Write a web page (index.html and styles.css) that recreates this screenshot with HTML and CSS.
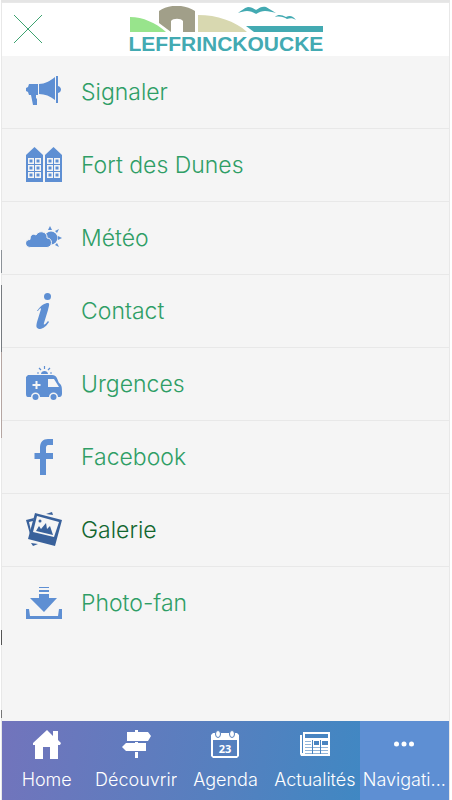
FILE: index.html
```html
<!DOCTYPE html>
<html lang="fr">
  <head>
    <meta charset="UTF-8" />
    <meta name="viewport" content="width=device-width, initial-scale=1.0" />
    <title>Leffrinckoucke</title>
    <link rel="stylesheet" href="styles.css">
  </head>
  <body>
    <div class="app">
      <header class="header">
        <button class="close" type="button" aria-label="Fermer">
          <svg width="30" height="30" viewBox="0 0 30 30">
            <path d="M1 1l28 28M29 1L1 29" stroke="#3da370" stroke-width="1" />
          </svg>
        </button>
        <div class="logo">
          <svg class="logo-drawing" width="194" height="27" viewBox="0 0 194 27">
            <path d="M1 11c13 0 26 6 36 15H1z" fill="#98e48c" />
            <path d="M30 5c9-7 26-7 36 0v21H54V15c-2-3-10-3-12 0v11l-12-9z" fill="#a19f89" />
            <path d="M69 9c19 0 37 6 49 17H69z" fill="#d8d8b0" />
            <path d="M117 20h77v6h-69z" fill="#43aab2" />
            <path d="M109 7c3-2 6-5 10-6 3 0 5 1 8 3 4-3 7-4 10-3l10 6c-4-1-7-2-11-2-3 0-6 1-9 3-3-2-6-3-9-3s-6 1-9 2z" fill="#43aab2" />
            <path d="M146 11c3-3 7-2 11 0 4-2 7-1 10 3-3-2-6-2-9-1-3-2-7-3-12-2z" fill="#43aab2" />
          </svg>
          <span class="logo-name">LEFFRINCKOUCKE</span>
        </div>
      </header>

      <nav class="menu">
        <a class="menu-item" href="#">
          <svg class="menu-icon" viewBox="0 0 36 36">
            <path d="M3 10h9v11h-2v3l1 1v6H7L5 21H3l-1-3-2-1v-3l2-1z" />
            <path d="M13 10c6 0 11-3 16-7v23c-5-4-10-6-16-6z" />
            <path d="M30 2h2v10c4 1 4 6 0 7v10h-2z" />
          </svg>
          <span>Signaler</span>
        </a>
        <a class="menu-item" href="#">
          <svg class="menu-icon" viewBox="0 0 36 36">
            <path d="M0 8L8.500 0 17 8v27H0zM19 8l8.500-8L36 8v27H19z" />
            <path fill="#f5f5f5" d="M2 11h6v6H2zM9 11h6v6H9zM2 18h6v6H2zM9 18h6v6H9zM2 25h6v6H2zM9 25h6v6H9zM21 11h6v6h-6zM28 11h6v6h-6zM21 18h6v6h-6zM28 18h6v6h-6zM21 25h6v6h-6zM28 25h6v6h-6z" />
            <path d="M3.500 12.500h3v3h-3zM10.500 12.500h3v3h-3zM3.500 19.500h3v3h-3zM10.500 19.500h3v3h-3zM3.500 26.500h3v3h-3zM10.500 26.500h3v3h-3zM22.500 12.500h3v3h-3zM29.500 12.500h3v3h-3zM22.500 19.500h3v3h-3zM29.500 19.500h3v3h-3zM22.500 26.500h3v3h-3zM29.500 26.500h3v3h-3z" />
          </svg>
          <span>Fort des Dunes</span>
        </a>
        <a class="menu-item" href="#">
          <svg class="menu-icon" viewBox="0 0 36 36">
            <circle cx="25" cy="18" r="6.500" />
            <path d="M22 10l2-4 2 4zM29 11l4-2-2 4zM32 16l4 2-4 2zM31 23l2 4-4-2z" />
            <path stroke="#f5f5f5" stroke-width="1" d="M5 27.500c-7 0-7-8-1-8C4 15 7 13 10 15c3-6 12-3 11 3 6 0 6 9 0 9.500z" />
          </svg>
          <span>Météo</span>
        </a>
        <a class="menu-item" href="#">
          <svg class="menu-icon" viewBox="0 0 36 36">
            <circle cx="21.500" cy="3.500" r="3.500" />
            <path d="M11 18c4-6 8-8 11-8 2 0 1 3 0 7l-4 13c-1 3 2 1 4-2l1 1c-4 6-7 7-10 7-3-1-3-3-2-7l4-13c0-2-2 0-3 2z" />
          </svg>
          <span>Contact</span>
        </a>
        <a class="menu-item" href="#">
          <svg class="menu-icon" viewBox="0 0 36 36">
            <path d="M2 9h24c5 0 5 4 7 8 3 2 3 5 3 9 0 3 0 4-2 5h-2c0-6-9-6-9 0H14c0-6-9-6-9 0H2c-2 0-2-2-2-4V11z" />
            <path fill="#f5f5f5" d="M22 13h6l5 8H22zM9.500 15h2v3h3v2h-3v3h-2v-3h-3v-2h3z" />
            <circle cx="9.500" cy="31" r="3" /><circle cx="27.500" cy="31" r="3" />
            <path d="M15 8c0-4 7-4 7 0z" />
            <path stroke="#5e8fd3" stroke-width="1.200" d="M18.500 0v3M13 2l2 2M24 2l-2 2M11 7h2M24 7h2" />
          </svg>
          <span>Urgences</span>
        </a>
        <a class="menu-item" href="#">
          <svg class="menu-icon" viewBox="0 0 36 36">
            <path d="M14 36V20H8.500v-6H14V9c0-6 3-9 8-9h5v6h-4c-3 0-3 2-3 4v4h7v6h-7v16z" />
          </svg>
          <span>Facebook</span>
        </a>
        <a class="menu-item menu-item-pressed" href="#">
          <svg class="menu-icon" viewBox="0 0 36 36">
            <path d="M0 8l8-2-1 3-4 1 2 9-1 3zM20 2l6-2 1 3zM5 31l7 1-5 2z" />
            <path fill-rule="evenodd" d="M9 1l27 7-7 26-27-7zM11 4L7 20l21 5 5-15z" />
            <path d="M10 19l3-5 2 3 5-6 1 6 3-3 3 9z" />
            <circle cx="14" cy="9" r="1.500" />
          </svg>
          <span>Galerie</span>
        </a>
        <a class="menu-item" href="#">
          <svg class="menu-icon" viewBox="0 0 36 36">
            <path d="M13 2h10v1H13zM13 5h10v2H13zM13 9h10v4h8L18 27 4 13h9z" />
            <path d="M0 24h3l1 7h28l1-7h3v10H0z" />
          </svg>
          <span>Photo-fan</span>
        </a>
      </nav>

      <nav class="tabs">
        <a class="tab" href="#">
          <svg class="tab-icon" viewBox="0 0 30 30">
            <path d="M15 0l6 6V1h5v9l3 3-1 2h-2v14h-8V17h-7v12H3V15H1v-2z" />
          </svg>
          <span class="tab-label">Home</span>
        </a>
        <a class="tab" href="#">
          <svg class="tab-icon" viewBox="0 0 30 30">
            <path d="M14 0h3v2h10l3 4-3 5H6V2h8zM14 12h3v1h8v8H5l-4-4 4-4h9zM14 22h3v6h-3z" />
          </svg>
          <span class="tab-label">Découvrir</span>
        </a>
        <a class="tab" href="#">
          <svg class="tab-icon" viewBox="0 0 30 30">
            <path fill-rule="evenodd" d="M3 3h24l2 2v21l-2 2H3l-2-2V5zM3 10v16h24V10z" />
            <ellipse cx="8" cy="4" rx="2.500" ry="3.500" stroke="#5580bd" />
            <ellipse cx="22" cy="4" rx="2.500" ry="3.500" stroke="#5580bd" />
            <text class="calendar-day" x="15" y="23" text-anchor="middle">23</text>
          </svg>
          <span class="tab-label">Agenda</span>
        </a>
        <a class="tab" href="#">
          <svg class="tab-icon" viewBox="0 0 30 30">
            <path fill-rule="evenodd" d="M3 2h27v24H1l-1-2V5h2v18h1zM5 4v4h23V4z" />
            <path fill="#4984c0" d="M12 10h1v14h-1zM20 10h1v14h-1zM14 11h5v4h-5zM22 11h6v4h-6z" />
            <path stroke="#4984c0" stroke-width="1" opacity=".6" d="M5 11.500h6M5 14.500h6M5 17.500h23M5 20.500h23M5 23.500h23" />
          </svg>
          <span class="tab-label">Actualités</span>
        </a>
        <a class="tab tab-active" href="#">
          <svg class="tab-icon" viewBox="0 0 30 30">
            <circle cx="7.500" cy="14" r="2.500" /><circle cx="15" cy="14" r="2.500" /><circle cx="22.500" cy="14" r="2.500" />
          </svg>
          <span class="tab-label">Navigati...</span>
        </a>
      </nav>
    </div>
  </body>
</html>
```

FILE: styles.css
```css
* {
  box-sizing: border-box;
}

body {
  margin: 0;
  background-color: white;
  font-family: Inter, "Liberation Sans", sans-serif;
}

a {
  text-decoration: none;
}

svg {
  display: block;
}

.app {
  display: flex;
  flex-direction: column;
  height: 100vh;
  margin: 0 2px 0 1px;
  padding: 1px 1px 0;
  border-top: 2px solid #e5e5e5;
  background-color: #e8e8e8;
  /* slivers of the page left uncovered beside the panel */
  background-image: linear-gradient(
    transparent 248px,
    #8c9298 248px 271px,
    transparent 271px 283px,
    #777b80 283px 350px,
    #b5a6a2 350px 436px,
    transparent 436px 628px,
    #555 628px 643px,
    transparent 643px 708px,
    #777 708px 716px,
    transparent 716px
  );
  background-size: 1px 100%;
  background-repeat: no-repeat;
}

.header {
  display: grid;
  grid-template-columns: 1fr auto 1fr;
  flex-shrink: 0;
  height: 53px;
  background-color: white;
}

.close {
  justify-self: start;
  align-self: start;
  margin: 11px;
  padding: 0;
  border: none;
  background: none;
  cursor: pointer;
}

.logo {
  width: 194px;
  padding-top: 3px;
}

.logo-name {
  display: block;
  color: #43aab2;
  font: bold 21px/22px "Liberation Sans", Arial, sans-serif;
}

.menu {
  flex: 1;
  background-color: #f5f5f5;
}

.menu-item {
  display: flex;
  align-items: center;
  gap: 19px;
  height: 73px;
  padding: 0 24px;
  border-bottom: 1px solid #e8e8e8;
  color: #2f9e66;
  font-size: 23px;
  font-weight: 300;
  line-height: 26px;
}

.menu-item:last-child {
  height: 72px;
  border-bottom: none;
}

.menu-item-pressed {
  color: #12662f;
}

.menu-icon {
  width: 36px;
  height: 36px;
  fill: #5e8fd3;
}

.menu-item-pressed .menu-icon {
  fill: #39619b;
}

.tabs {
  display: grid;
  grid-template-columns: repeat(5, minmax(0, 1fr));
  flex-shrink: 0;
  height: 79px;
  background: linear-gradient(100deg, #7274bc, #5580bf 50%, #3f88c3 82%);
}

.tab {
  display: flex;
  flex-direction: column;
  align-items: center;
  gap: 8px;
  padding: 9px 2px 0;
  color: white;
}

.tab-active {
  background-color: #5e8fd3;
}

.tab-icon {
  width: 30px;
  height: 30px;
  fill: white;
}

.tab-label {
  max-width: 100%;
  overflow: hidden;
  font-size: 18px;
  font-weight: 300;
  line-height: 24px;
  text-overflow: ellipsis;
  white-space: nowrap;
}

.calendar-day {
  font: bold 11px "Open Sans", sans-serif;
}
```
